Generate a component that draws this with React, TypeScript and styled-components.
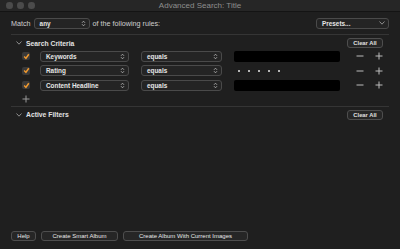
import styled, { createGlobalStyle } from 'styled-components';

const Global = createGlobalStyle`
  html, body {
    margin: 0;
    padding: 0;
    background: #1e1e1e;
  }
  * { box-sizing: border-box; }
`;

const Window = styled.div`
  width: 400px;
  height: 249px;
  background: #1f1f1f;
  display: flex;
  flex-direction: column;
  font-family: "Liberation Sans", Arial, sans-serif;
  font-size: 6.6px;
  color: #d8d8d8;
  overflow: hidden;
`;

const TitleBar = styled.div`
  height: 12px;
  background: #262626;
  border-bottom: 1px solid #141414;
  display: flex;
  align-items: center;
  padding-left: 6px;
  position: relative;
`;

const Light = styled.span`
  width: 6.5px;
  height: 6.5px;
  border-radius: 50%;
  background: #4b4b4b;
  margin-right: 4.5px;
`;

const Title = styled.div`
  position: absolute;
  left: 0;
  right: 0;
  text-align: center;
  font-size: 8px;
  color: #8e8e8e;
`;

const Body = styled.div`
  flex: 1;
  display: flex;
  flex-direction: column;
  padding: 0 11px 8px 11px;
`;

const MatchRow = styled.div`
  display: flex;
  align-items: center;
  height: 12px;
  margin-top: 5px;
  gap: 3px;
`;

const Label = styled.span`
  color: #cfcfcf;
  font-size: 7.2px;
`;

const Popup = styled.div<{ w: number }>`
  width: ${(p) => p.w}px;
  height: 11px;
  border: 1px solid #4a4a4a;
  border-radius: 3px;
  background: #242424;
  display: flex;
  align-items: center;
  justify-content: space-between;
  padding: 0 3px 0 5px;
  color: #e6e6e6;
  font-weight: bold;
  font-size: 6.4px;
`;

const Spacer = styled.div`
  flex: 1;
`;

const Separator = styled.div`
  height: 1px;
  background: #353535;
`;

const SectionHeader = styled.div`
  display: flex;
  align-items: center;
  height: 12px;
  padding-left: 5px;
`;

const SectionTitle = styled.span`
  margin-left: 4px;
  font-weight: bold;
  font-size: 6.8px;
  color: #e2e2e2;
`;

const SmallButton = styled.div<{ w: number }>`
  width: ${(p) => p.w}px;
  height: 10px;
  border: 1px solid #4e4e4e;
  border-radius: 3px;
  background: #262626;
  display: flex;
  align-items: center;
  justify-content: center;
  font-weight: bold;
  font-size: 5.8px;
  color: #e0e0e0;
  margin-right: 6px;
`;

const RuleList = styled.div`
  display: flex;
  flex-direction: column;
`;

const RuleRow = styled.div`
  display: flex;
  align-items: center;
  height: 14.5px;
  padding-left: 11px;
`;

const Check = styled.div`
  width: 8px;
  height: 8px;
  border-radius: 2px;
  background: #3a3a3a;
  display: flex;
  align-items: center;
  justify-content: center;
  margin-right: 10px;
`;

const Field = styled.div`
  width: 106px;
  height: 11px;
  border-radius: 2px;
  background: #000;
  margin-left: 12px;
`;

const Stars = styled.div`
  width: 106px;
  height: 11px;
  margin-left: 12px;
  display: flex;
  align-items: center;
  gap: 8px;
  padding-left: 4px;
`;

const Dot = styled.span`
  width: 2px;
  height: 2px;
  border-radius: 50%;
  background: #e8e8e8;
`;

const PlusMinus = styled.div`
  display: flex;
  gap: 11px;
  margin-left: 16px;
`;

const AddRow = styled.div`
  height: 13px;
  display: flex;
  align-items: center;
  padding-left: 11px;
`;

const Footer = styled.div`
  display: flex;
  gap: 5px;
`;

const FooterButton = styled(SmallButton)`
  margin-right: 0;
  font-weight: normal;
  color: #e8e8e8;
  font-size: 6px;
`;

function Arrows() {
  return (
    <svg width="5" height="7" viewBox="0 0 5 7">
      <path d="M1 2.8 L2.5 1.2 L4 2.8 M1 4.2 L2.5 5.8 L4 4.2" stroke="#bbb" strokeWidth="0.8" fill="none" />
    </svg>
  );
}

function Chevron() {
  return (
    <svg width="6" height="4" viewBox="0 0 6 4">
      <path d="M0.5 0.5 L3 3.2 L5.5 0.5" stroke="#aaa" strokeWidth="0.8" fill="none" />
    </svg>
  );
}

function CheckMark() {
  return (
    <svg width="7" height="7" viewBox="0 0 7 7">
      <path d="M1.2 3.6 L2.9 5.4 L5.8 1.2" stroke="#f29a2e" strokeWidth="1.5" fill="none" />
    </svg>
  );
}

function Minus() {
  return (
    <svg width="8" height="8" viewBox="0 0 8 8">
      <path d="M0.5 4 H7.5" stroke="#bdbdbd" strokeWidth="1" />
    </svg>
  );
}

function Plus({ color = '#bdbdbd' }: { color?: string }) {
  return (
    <svg width="8" height="8" viewBox="0 0 8 8">
      <path d="M0.5 4 H7.5 M4 0.5 V7.5" stroke={color} strokeWidth="1" />
    </svg>
  );
}

const rules = [
  { field: 'Keywords', kind: 'text' },
  { field: 'Rating', kind: 'rating' },
  { field: 'Content Headline', kind: 'text' },
];

export default function App() {
  return (
    <>
      <Global />
      <Window>
        <TitleBar>
          <Light />
          <Light />
          <Light />
          <Title>Advanced Search: Title</Title>
        </TitleBar>
        <Body>
          <MatchRow>
            <Label>Match</Label>
            <Popup w={56}>
              <span>any</span>
              <Arrows />
            </Popup>
            <Label>of the following rules:</Label>
            <Spacer />
            <Popup w={73}>
              <span>Presets...</span>
              <Chevron />
            </Popup>
          </MatchRow>
          <Separator style={{ marginTop: 5 }} />
          <SectionHeader style={{ marginTop: 2 }}>
            <Chevron />
            <SectionTitle>Search Criteria</SectionTitle>
            <Spacer />
            <SmallButton w={36}>Clear All</SmallButton>
          </SectionHeader>
          <RuleList>
            {rules.map((r) => (
              <RuleRow key={r.field}>
                <Check>
                  <CheckMark />
                </Check>
                <Popup w={89}>
                  <span>{r.field}</span>
                  <Arrows />
                </Popup>
                <Popup w={81} style={{ marginLeft: 12 }}>
                  <span>equals</span>
                  <Arrows />
                </Popup>
                {r.kind === 'text' ? (
                  <Field />
                ) : (
                  <Stars>
                    {[0, 1, 2, 3, 4].map((i) => (
                      <Dot key={i} />
                    ))}
                  </Stars>
                )}
                <PlusMinus>
                  <Minus />
                  <Plus />
                </PlusMinus>
              </RuleRow>
            ))}
          </RuleList>
          <AddRow>
            <Plus color="#9a9a9a" />
          </AddRow>
          <Separator />
          <SectionHeader style={{ marginTop: 2 }}>
            <Chevron />
            <SectionTitle>Active Filters</SectionTitle>
            <Spacer />
            <SmallButton w={36}>Clear All</SmallButton>
          </SectionHeader>
          <Spacer />
          <Footer>
            <FooterButton w={25}>Help</FooterButton>
            <FooterButton w={77}>Create Smart Album</FooterButton>
            <FooterButton w={125}>Create Album With Current Images</FooterButton>
          </Footer>
        </Body>
      </Window>
    </>
  );
}
